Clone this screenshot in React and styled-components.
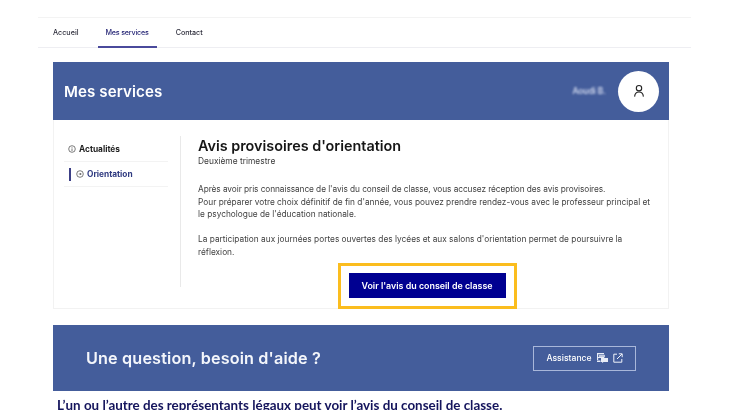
import React from "react";
import styled, { createGlobalStyle } from "styled-components";

const Global = createGlobalStyle`
  html, body { margin: 0; padding: 0; background: #fff; overflow: hidden; }
  body { font-family: "Inter", "Noto Sans", sans-serif; color: #1e1e1e; }
`;

const Page = styled.div`
  width: 730px;
  height: 410px;
  padding-top: 17px;
  box-sizing: border-box;
  overflow: hidden;
  filter: blur(0.45px);
`;

const Nav = styled.nav`
  width: 653px;
  height: 31px;
  margin-left: 38px;
  padding-left: 7px;
  box-sizing: border-box;
  display: flex;
  gap: 11px;
  border-top: 1px solid #f3f3f3;
  border-bottom: 1px solid #eeeef2;
`;

const NavItem = styled.a`
  height: 30px;
  padding: 0 8px;
  box-sizing: border-box;
  display: flex;
  align-items: center;
  font-size: 7.2px;
  font-weight: 500;
  letter-spacing: ${(p) => (p.$active ? "-0.22px" : "0")};
  color: ${(p) => (p.$active ? "#2a2a78" : "#2c2c3a")};
  border-bottom: 2px solid ${(p) => (p.$active ? "#4a4a9c" : "transparent")};
`;

const Main = styled.main`
  width: 616px;
  margin: 14px 0 0 53px;
`;

const Card = styled.section`
  height: 247px;
  box-sizing: border-box;
  border: 1px solid #f2f2f2;
  border-top: 0;
  display: flex;
  flex-direction: column;
`;

const Header = styled.header`
  height: 58px;
  margin: 0 -1px;
  padding: 0 10px 0 11px;
  background: #445d9b;
  display: flex;
  align-items: center;
  color: #fff;
`;

const PageTitle = styled.h1`
  margin: 0;
  flex: 1;
  font-size: 15.1px;
  font-weight: 600;
  letter-spacing: 0.1px;
`;

const UserName = styled.span`
  font-size: 8.3px;
  font-weight: 600;
  color: #d5dcf0;
  margin-right: 12px;
  filter: blur(1.1px);
`;

const Avatar = styled.div`
  width: 41px;
  height: 41px;
  border-radius: 50%;
  background: #fff;
  display: flex;
  align-items: center;
  justify-content: center;
`;

const Body = styled.div`
  flex: 1;
  min-height: 0;
  display: flex;
  align-items: flex-start;
  padding: 16px 0 0 10px;
`;

const Side = styled.aside`
  width: 117px;
  height: 151px;
  box-sizing: border-box;
  margin-right: 17px;
  padding-top: 1px;
  border-right: 1px solid #e9e9e9;
  flex: none;
`;

const SideList = styled.div`
  width: 104px;
`;

const SideItem = styled.div`
  height: 25px;
  display: flex;
  align-items: center;
  gap: 3px;
  padding-left: ${(p) => (p.$active ? "5px" : "4px")};
  box-sizing: border-box;
  border-bottom: 1px solid #f3f3f3;
  font-size: 8.3px;
  font-weight: 700;
  color: ${(p) => (p.$active ? "#2f3a80" : "#1e1e1e")};
`;

const ActiveBar = styled.span`
  width: 2px;
  height: 13px;
  background: #3c3f86;
  margin-right: 2px;
`;

const Content = styled.div`
  flex: 1;
  min-width: 0;
  padding: 1px 15px 0 0;
  display: flex;
  flex-direction: column;
`;

const Title = styled.h2`
  margin: 0;
  font-size: 14.4px;
  line-height: 18px;
  font-weight: 600;
  color: #161616;
`;

const Sub = styled.div`
  font-size: 8.4px;
  line-height: 12px;
  color: #3a3a3a;
  margin-bottom: 16px;
`;

const Para = styled.p`
  margin: 0 0 12.5px;
  font-size: 8.32px;
  line-height: 12.5px;
  color: #3f3f3f;
`;

const TightLine = styled.span`
  letter-spacing: -0.08px;
`;

const Highlight = styled.div`
  align-self: center;
  width: 179px;
  height: 46px;
  margin: -8px 0 0 3px;
  box-sizing: border-box;
  border: 3px solid #fbbd1e;
  display: flex;
  align-items: center;
  justify-content: center;
`;

const MainButton = styled.button`
  width: 157px;
  height: 25px;
  border: 0;
  padding: 0;
  font-family: inherit;
  font-size: 8.9px;
  font-weight: 600;
  color: #fff;
  background: #000091;
`;

const Banner = styled.section`
  height: 66px;
  margin-top: 16px;
  padding: 0 33px;
  background: #445d9b;
  display: flex;
  align-items: center;
  justify-content: space-between;
  color: #fff;
`;

const BannerTitle = styled.h2`
  margin: 0;
  font-size: 16.2px;
  font-weight: 600;
  letter-spacing: 0.15px;
  color: #f4f6fb;
`;

const Assistance = styled.a`
  width: 103px;
  height: 25px;
  box-sizing: border-box;
  border: 1px solid #a9b7da;
  display: flex;
  align-items: center;
  justify-content: center;
  gap: 5px;
  font-size: 8.6px;
  font-weight: 500;
  color: #fff;
`;

const Caption = styled.p`
  margin: 7px 0 0 4px;
  white-space: nowrap;
  font-family: "Lato", sans-serif;
  font-size: 13.4px;
  line-height: 14px;
  font-weight: 700;
  color: #14145c;
`;

const Circle = ({ glyph }) => (
  <svg width="8" height="8" viewBox="0 0 8 8" fill="none" stroke="#444" strokeWidth="0.7">
    <circle cx="4" cy="4" r="3.3" />
    {glyph === "info" ? (
      <path d="M4 3.4V6M4 2v.7" />
    ) : (
      <path d="M2.8 4h2.4M4.2 3l1 1-1 1" />
    )}
  </svg>
);

const UserIcon = () => (
  <svg width="12" height="14" viewBox="0 0 12 14" fill="none" stroke="#222" strokeWidth="1.1">
    <circle cx="6" cy="4.2" r="2.7" />
    <path d="M1.6 12.6c.3-3 2-4.6 4.4-4.6s4.1 1.6 4.4 4.6" />
  </svg>
);

const HelpIcon = () => (
  <svg width="11" height="10" viewBox="0 0 11 10" fill="#e8ecf6">
    <path d="M0 0h7v1.2H1.2V4H7v1H1.2v2H0z" />
    <path d="M2 1.8h6v2.6H2z" opacity=".75" />
    <path d="M4 5h7v4H6.5L5 10V9H4z" />
    <path d="M0 7.5h3.5V9H0z" />
  </svg>
);

const ExternalIcon = () => (
  <svg width="10" height="10" viewBox="0 0 10 10" fill="none" stroke="#f0f3fa" strokeWidth="1">
    <path d="M4 1.2H.8v8h8V6" />
    <path d="M4 6l5-5M5.8.8h3.4v3.4" />
  </svg>
);

export default function App() {
  return (
    <Page>
      <Global />
      <Nav>
        <NavItem>Accueil</NavItem>
        <NavItem $active>Mes services</NavItem>
        <NavItem>Contact</NavItem>
      </Nav>
      <Main>
        <Card>
          <Header>
            <PageTitle>Mes services</PageTitle>
            <UserName>Aoudi B.</UserName>
            <Avatar>
              <UserIcon />
            </Avatar>
          </Header>
          <Body>
            <Side>
              <SideList>
                <SideItem>
                  <Circle glyph="info" />
                  Actualités
                </SideItem>
                <SideItem $active>
                  <ActiveBar />
                  <Circle glyph="arrow" />
                  Orientation
                </SideItem>
              </SideList>
            </Side>
            <Content>
              <Title>Avis provisoires d'orientation</Title>
              <Sub>Deuxième trimestre</Sub>
              <Para>
                <TightLine>Après avoir pris connaissance de l'avis du conseil de classe, vous accusez réception des avis provisoires.</TightLine>
                <br />
                Pour préparer votre choix définitif de fin d'année, vous pouvez prendre rendez-vous avec le professeur principal et le psychologue de l'éducation nationale.
              </Para>
              <Para>
                La participation aux journées portes ouvertes des lycées et aux salons d'orientation permet de poursuivre la réflexion.
              </Para>
              <Highlight>
                <MainButton>Voir l'avis du conseil de classe</MainButton>
              </Highlight>
            </Content>
          </Body>
        </Card>
        <Banner>
          <BannerTitle>Une question, besoin d'aide ?</BannerTitle>
          <Assistance>
            Assistance
            <HelpIcon />
            <ExternalIcon />
          </Assistance>
        </Banner>
        <Caption>L’un ou l’autre des représentants légaux peut voir l’avis du conseil de classe.</Caption>
      </Main>
    </Page>
  );
}
